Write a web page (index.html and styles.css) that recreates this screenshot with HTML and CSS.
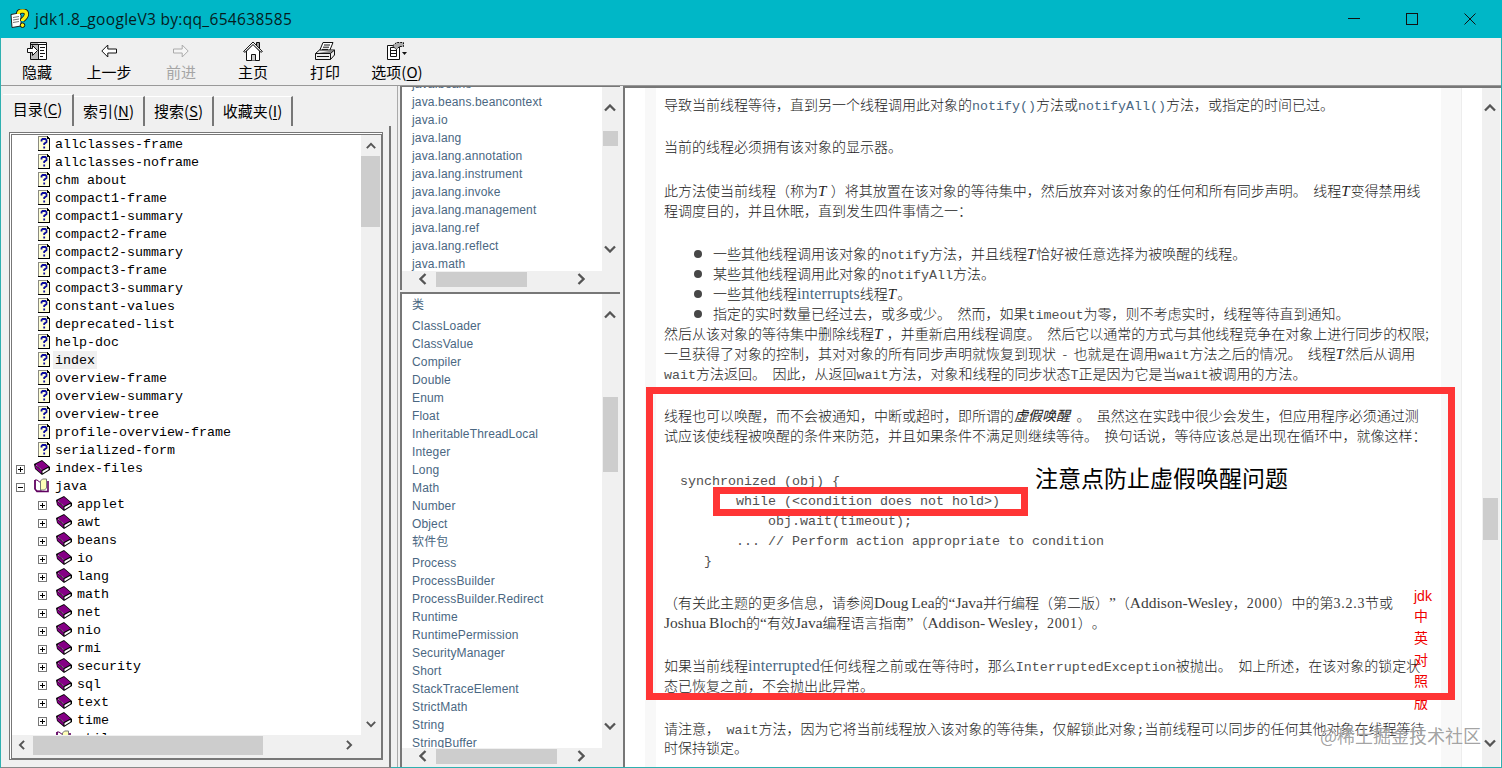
FILE: index.html
```
<!DOCTYPE html>
<html lang="zh-CN">
<head>
  <meta charset="utf-8">
  <title>jdk1.8_googleV3 by:qq_654638585</title>
  <link rel="stylesheet" href="styles.css">
</head>
<body>
  <!-- shared icons -->
  <svg class="sprite">
    <symbol id="page" viewBox="0 0 12 15">
      <path fill="#ffffd8" d="M0 0h9l3 3v12H0z"/>
      <path fill="#8a8a80" d="M0 0h9v1H1v13H0z"/>
      <path fill="#000" d="M9 0h1v1h1v1h1v13H0v-1h11V3H9z"/>
      <path fill="none" stroke="#0a0a9c" stroke-width="1.800" d="M3.500 5.500V4l1-1h3l1 1v2L6.200 7.700V9M6.200 10.500v2"/>
    </symbol>
    <symbol id="book" viewBox="0 0 16 15">
      <path fill="#000" d="M0 4L8 0l8 7v3L8 15 1 9z"/>
      <path fill="#850085" d="M1.500 4.200L8 1l6.500 5.500L8 10zM1 5l6.500 6v2.500L1.500 8.500z"/>
      <path fill="#fff" d="M8.500 11l6-3.200v2L8.500 13.500z"/>
      <path fill="none" stroke="#e6c0e6" stroke-width=".8" stroke-dasharray="1.200 .6" d="M2 5l6 5.300"/>
    </symbol>
    <symbol id="open" viewBox="0 0 16 15">
      <path fill="#fff" stroke="#600060" d="M1 2h2l4 3v8H3l-2-2z"/>
      <path fill="#ffffb8" stroke="#777" d="M6.500 12V3l2-2h4v9l-2 2z"/>
      <path fill="none" stroke="#600060" stroke-width="1.600" d="M1 2v9l2 2.500h11V3"/>
    </symbol>
    <symbol id="plus" viewBox="0 0 9 9">
      <path fill="#fff" stroke="#777" d="M.5.5h8v8h-8z"/>
      <path stroke="#000" d="M2 4.500h5M4.500 2v5"/>
    </symbol>
    <symbol id="minus" viewBox="0 0 9 9">
      <path fill="#fff" stroke="#777" d="M.5.5h8v8h-8z"/>
      <path stroke="#000" d="M2 4.500h5"/>
    </symbol>
    <symbol id="chev" viewBox="0 0 12 8">
      <path fill="none" stroke="#555" stroke-width="2.300" d="M1 6.500l5-5 5 5"/>
    </symbol>
  </svg>

  <div class="window">
    <div class="titlebar">
      <svg class="app-icon" width="20" height="20" viewBox="0 0 20 20">
        <path fill="#fff" stroke="#222" d="M1 5.500l8-1.500 2 2v11l-9 1.500z"/>
        <path stroke="#777" d="M3 8.500l6-1M3 11l6-1M3 13.500l6-1"/>
        <path fill="none" stroke="#111" stroke-width="5" d="M8.500 5q0-3 4-3t4 3-4 6v1"/>
        <path fill="none" stroke="#f8ee10" stroke-width="3.400" d="M8.500 5q0-3 4-3t4 3-4 6v1"/>
        <circle cx="12.500" cy="16.200" r="2.300" fill="#f8ee10" stroke="#111"/>
      </svg>
      <span class="title">jdk1.8_googleV3 by:qq_654638585</span>
      <div class="controls">
        <svg width="12" height="12"><path d="M0 5.500h12"/></svg>
        <svg width="12" height="12"><path d="M.5.5h11v11H.5z"/></svg>
        <svg class="smooth" width="12" height="12"><path d="M.5.5l11 11M11.500.5l-11 11"/></svg>
      </div>
    </div>

    <div class="toolbar">
      <div class="tool">
        <svg width="20" height="18" viewBox="0 0 20 18">
          <path fill="#fff" stroke="#111" d="M3.500.5h16v17h-16z"/>
          <path fill="#bbb" d="M4 1h7v16H4z"/>
          <path stroke="#111" d="M4 2.500h15M11.500 2v15M13 5.500h5M13 8.500h4M13 11.500h5M13 14.500h3"/>
          <path fill="#fff" stroke="#111" d="M.5 6.500h5v-3l5 5-5 5v-3h-5z"/>
        </svg>
        <span>隐藏</span>
      </div>
      <div class="tool">
        <svg width="16" height="18" viewBox="0 0 16 18"><path fill="#fff" stroke="#111" d="M.8 9l6-6v4h8.700v4H6.800v4z"/></svg>
        <span>上一步</span>
      </div>
      <div class="tool disabled">
        <svg width="16" height="18" viewBox="0 0 16 18"><path fill="#f5f5f5" stroke="#aaa" d="M15.200 9l-6-6v4H.5v4h8.700v4z"/></svg>
        <span>前进</span>
      </div>
      <div class="tool">
        <svg width="20" height="20" viewBox="0 0 20 20">
          <path fill="#999" stroke="#111" d="M13.500 7V1.500h3V9"/>
          <path fill="#fff" stroke="#111" d="M3.500 19.500V10L10 3l6.500 7v9.500z"/>
          <path fill="#fff" stroke="#111" d="M.6 10.500L10 1l9.400 9.500-1.400.8L10 3.600 2 11.300z"/>
          <path fill="#ccc" stroke="#111" d="M8.500 19.500v-6h4v6"/>
        </svg>
        <span>主页</span>
      </div>
      <div class="tool">
        <svg width="20" height="18" viewBox="0 0 20 18">
          <path fill="#fff" stroke="#111" d="M4.500 9L8 .5h10L14.500 9z"/>
          <path stroke="#111" d="M9 3h6M8 5.200h6M7 7.400h6"/>
          <path fill="#eee" stroke="#111" d="M.5 11.500l4-3.500H19.500v5l-4 4.500H.5z"/>
          <path fill="#888" stroke="#111" d="M.5 11.500h15l4-3.500M15.500 11.500v6M2 14.500h12"/>
        </svg>
        <span>打印</span>
      </div>
      <div class="tool">
        <svg width="20" height="18" viewBox="0 0 20 18">
          <path fill="#fff" stroke="#111" d="M.5 3.500h12v14H.5z"/>
          <path fill="#fff" stroke="#111" d="M3.500 5.500h6v9h-6z"/>
          <path stroke="#111" d="M4 8.500h5M4 11.500h5"/>
          <path fill="#aaa" stroke="#111" stroke-dasharray="2 1" d="M5.500 4l4-3.500h7v4h-4l-3 3z"/>
          <path fill="#111" d="M15 10h5l-2.500 3z"/>
        </svg>
        <span>选项(<u>O</u>)</span>
      </div>
    </div>

    <div class="main">
      <div class="nav">
        <div class="tabs">
          <div class="tab active">目录(<u>C</u>)</div>
          <div class="tab search-index">索引(<u>N</u>)</div>
          <div class="tab search">搜索(<u>S</u>)</div>
          <div class="tab fav">收藏夹(<u>I</u>)</div>
        </div>
        <div class="tab-body">
          <div class="tree-box">
            <div class="tree">
              <div class="row"><svg class="page"><use href="#page"/></svg><span>allclasses-frame</span></div>
              <div class="row"><svg class="page"><use href="#page"/></svg><span>allclasses-noframe</span></div>
              <div class="row"><svg class="page"><use href="#page"/></svg><span>chm about</span></div>
              <div class="row"><svg class="page"><use href="#page"/></svg><span>compact1-frame</span></div>
              <div class="row"><svg class="page"><use href="#page"/></svg><span>compact1-summary</span></div>
              <div class="row"><svg class="page"><use href="#page"/></svg><span>compact2-frame</span></div>
              <div class="row"><svg class="page"><use href="#page"/></svg><span>compact2-summary</span></div>
              <div class="row"><svg class="page"><use href="#page"/></svg><span>compact3-frame</span></div>
              <div class="row"><svg class="page"><use href="#page"/></svg><span>compact3-summary</span></div>
              <div class="row"><svg class="page"><use href="#page"/></svg><span>constant-values</span></div>
              <div class="row"><svg class="page"><use href="#page"/></svg><span>deprecated-list</span></div>
              <div class="row"><svg class="page"><use href="#page"/></svg><span>help-doc</span></div>
              <div class="row"><svg class="page"><use href="#page"/></svg><span class="selected">index</span></div>
              <div class="row"><svg class="page"><use href="#page"/></svg><span>overview-frame</span></div>
              <div class="row"><svg class="page"><use href="#page"/></svg><span>overview-summary</span></div>
              <div class="row"><svg class="page"><use href="#page"/></svg><span>overview-tree</span></div>
              <div class="row"><svg class="page"><use href="#page"/></svg><span>profile-overview-frame</span></div>
              <div class="row"><svg class="page"><use href="#page"/></svg><span>serialized-form</span></div>
              <div class="row folder"><svg class="box"><use href="#plus"/></svg><svg class="book"><use href="#book"/></svg><span>index-files</span></div>
              <div class="row folder"><svg class="box"><use href="#minus"/></svg><svg class="book"><use href="#open"/></svg><span>java</span></div>
              <div class="row folder sub"><svg class="box"><use href="#plus"/></svg><svg class="book"><use href="#book"/></svg><span>applet</span></div>
              <div class="row folder sub"><svg class="box"><use href="#plus"/></svg><svg class="book"><use href="#book"/></svg><span>awt</span></div>
              <div class="row folder sub"><svg class="box"><use href="#plus"/></svg><svg class="book"><use href="#book"/></svg><span>beans</span></div>
              <div class="row folder sub"><svg class="box"><use href="#plus"/></svg><svg class="book"><use href="#book"/></svg><span>io</span></div>
              <div class="row folder sub"><svg class="box"><use href="#plus"/></svg><svg class="book"><use href="#book"/></svg><span>lang</span></div>
              <div class="row folder sub"><svg class="box"><use href="#plus"/></svg><svg class="book"><use href="#book"/></svg><span>math</span></div>
              <div class="row folder sub"><svg class="box"><use href="#plus"/></svg><svg class="book"><use href="#book"/></svg><span>net</span></div>
              <div class="row folder sub"><svg class="box"><use href="#plus"/></svg><svg class="book"><use href="#book"/></svg><span>nio</span></div>
              <div class="row folder sub"><svg class="box"><use href="#plus"/></svg><svg class="book"><use href="#book"/></svg><span>rmi</span></div>
              <div class="row folder sub"><svg class="box"><use href="#plus"/></svg><svg class="book"><use href="#book"/></svg><span>security</span></div>
              <div class="row folder sub"><svg class="box"><use href="#plus"/></svg><svg class="book"><use href="#book"/></svg><span>sql</span></div>
              <div class="row folder sub"><svg class="box"><use href="#plus"/></svg><svg class="book"><use href="#book"/></svg><span>text</span></div>
              <div class="row folder sub"><svg class="box"><use href="#plus"/></svg><svg class="book"><use href="#book"/></svg><span>time</span></div>
              <div class="row folder sub"><svg class="box"></svg><svg class="book"><use href="#open"/></svg><span>util</span></div>
            </div>
            <div class="vbar tree-v">
              <svg class="chev"><use href="#chev"/></svg>
              <div class="thumb"></div>
              <svg class="chev down"><use href="#chev"/></svg>
            </div>
            <div class="hbar tree-h">
              <svg class="chev left"><use href="#chev"/></svg>
              <div class="thumb"></div>
              <svg class="chev right"><use href="#chev"/></svg>
            </div>
          </div>
        </div>
      </div>

      <div class="frames">
        <div class="frame packages">
          <div class="links">
            <a>java.beans</a>
            <a>java.beans.beancontext</a>
            <a>java.io</a>
            <a>java.lang</a>
            <a>java.lang.annotation</a>
            <a>java.lang.instrument</a>
            <a>java.lang.invoke</a>
            <a>java.lang.management</a>
            <a>java.lang.ref</a>
            <a>java.lang.reflect</a>
            <a>java.math</a>
          </div>
          <div class="vbar">
            <svg class="chev"><use href="#chev"/></svg>
            <div class="thumb"></div>
            <svg class="chev down"><use href="#chev"/></svg>
          </div>
          <div class="hbar">
            <svg class="chev left"><use href="#chev"/></svg>
            <div class="thumb"></div>
            <svg class="chev right"><use href="#chev"/></svg>
          </div>
        </div>
        <div class="frame classes">
          <div class="links">
            <a class="cjk">类</a>
            <a>ClassLoader</a>
            <a>ClassValue</a>
            <a>Compiler</a>
            <a>Double</a>
            <a>Enum</a>
            <a>Float</a>
            <a>InheritableThreadLocal</a>
            <a>Integer</a>
            <a>Long</a>
            <a>Math</a>
            <a>Number</a>
            <a>Object</a>
            <a class="cjk">软件包</a>
            <a>Process</a>
            <a>ProcessBuilder</a>
            <a>ProcessBuilder.Redirect</a>
            <a>Runtime</a>
            <a>RuntimePermission</a>
            <a>SecurityManager</a>
            <a>Short</a>
            <a>StackTraceElement</a>
            <a>StrictMath</a>
            <a>String</a>
            <a>StringBuffer</a>
          </div>
          <div class="vbar">
            <svg class="chev"><use href="#chev"/></svg>
            <div class="thumb"></div>
            <svg class="chev down"><use href="#chev"/></svg>
          </div>
          <div class="hbar">
            <svg class="chev left"><use href="#chev"/></svg>
            <div class="thumb"></div>
            <svg class="chev right"><use href="#chev"/></svg>
          </div>
        </div>
      </div>

      <div class="doc">
        <div class="article">
          <p>导致当前线程等待，直到另一个线程调用此对象的<code class="link">notify()</code>方法或<code class="link">notifyAll()</code>方法，或指定的时间已过。</p>
          <p class="p2">当前的线程必须拥有该对象的显示器。</p>
          <p class="p3">此方法使当前线程（称为<i>T </i>）将其放置在该对象的等待集中，然后放弃对该对象的任何和所有同步声明。 线程<i>T</i>变得禁用线<br>程调度目的，并且休眠，直到发生四件事情之一：</p>
          <ul>
            <li>一些其他线程调用该对象的<code>notify</code>方法，并且线程<i>T</i>恰好被任意选择为被唤醒的线程。</li>
            <li>某些其他线程调用此对象的<code>notifyAll</code>方法。</li>
            <li>一些其他线程<b class="link">interrupts</b>线程<i>T</i>。</li>
            <li>指定的实时数量已经过去，或多或少。 然而，如果<code>timeout</code>为零，则不考虑实时，线程等待直到通知。</li>
          </ul>
          <p>然后从该对象的等待集中删除线程<i>T </i>，并重新启用线程调度。 然后它以通常的方式与其他线程竞争在对象上进行同步的权限;<br>一旦获得了对象的控制，其对对象的所有同步声明就恢复到现状 - 也就是在调用<code>wait</code>方法之后的情况。 线程<i>T</i>然后从调用<br><code>wait</code>方法返回。 因此，从返回<code>wait</code>方法，对象和线程的同步状态<code>T</code>正是因为它是当<code>wait</code>被调用的方法。</p>
          <p class="p4">线程也可以唤醒，而不会被通知，中断或超时，即所谓的<em>虚假唤醒</em> 。 虽然这在实践中很少会发生，但应用程序必须通过测<br>试应该使线程被唤醒的条件来防范，并且如果条件不满足则继续等待。 换句话说，等待应该总是出现在循环中，就像这样：</p>
<pre>  synchronized (obj) {
         while (&lt;condition does not hold&gt;)
             obj.wait(timeout);
         ... // Perform action appropriate to condition
     }</pre>
          <p class="p5">（有关此主题的更多信息，请参阅<b>Doug Lea</b>的<b>“Java</b>并行编程（第二版）<b>”</b>（<b>Addison-Wesley</b>，<b class="num">2000</b>）中的第<b class="num">3.2.3</b>节或<br><b>Joshua Bloch</b>的<b>“</b>有效<b>Java</b>编程语言指南<b>”</b>（<b>Addison- Wesley</b>，<b class="num">2001</b>）。</p>
          <p class="p6">如果当前线程<b class="link">interrupted</b>任何线程之前或在等待时，那么<code>InterruptedException</code>被抛出。 如上所述，在该对象的锁定状<br>态已恢复之前，不会抛出此异常。</p>
          <p class="p7">请注意， <code>wait</code>方法，因为它将当前线程放入该对象的等待集，仅解锁此对象<code>;</code>当前线程可以同步的任何其他对象在线程等待<br>时保持锁定。</p>
        </div>
        <div class="vbar doc-v">
          <svg class="chev"><use href="#chev"/></svg>
          <div class="thumb"></div>
          <svg class="chev down"><use href="#chev"/></svg>
        </div>
      </div>
    </div>
  </div>

  <!-- marks drawn over the page -->
  <div class="side-note"><span class="latin">jdk</span><span>中</span><span>英</span><span>对</span><span>照</span><span>版</span></div>
  <div class="mark mark-big"></div>
  <div class="mark mark-code"></div>
  <div class="remark">注意点防止虚假唤醒问题</div>
  <div class="watermark">@稀土掘金技术社区</div>
</body>
</html>
```
FILE: styles.css
```
* {
  box-sizing: border-box;
}
body {
  margin: 0;
  overflow: hidden;
  font-family: "Liberation Sans", "Noto Sans CJK SC", sans-serif;
}
svg {
  display: block;
  flex: none;
}
.sprite {
  position: absolute;
  width: 0;
  height: 0;
}
.window {
  display: flex;
  flex-direction: column;
  width: 1502px;
  height: 768px;
  border: 1px solid #2fb0b0;
  border-top: 0;
  background: #f0f0f0;
}

/* title bar */
.titlebar {
  display: flex;
  align-items: center;
  flex: none;
  height: 38px;
  margin: 0 -1px;
  padding-left: 10px;
  background: #00b7c7;
}
.title {
  margin-left: 5px;
  color: #061c1e;
  font: 15.5px/20px "Open Sans", "Noto Sans", sans-serif;
  letter-spacing: 0.32px;
}
.controls {
  display: flex;
  gap: 46px;
  margin-left: auto;
  padding-right: 26px;
}
.controls path {
  fill: none;
  stroke: #111;
  shape-rendering: crispEdges;
}
.controls .smooth path {
  shape-rendering: auto;
}

/* toolbar */
.toolbar {
  display: flex;
  flex: none;
  height: 48px;
  border-bottom: 1px solid #999;
}
.tool {
  display: flex;
  flex-direction: column;
  align-items: center;
  width: 72px;
  padding-top: 3px;
  font: 15px/20px "Noto Sans CJK SC", sans-serif;
  white-space: nowrap;
}
.tool svg {
  height: 20px;
}
.tool span {
  margin-top: 1px;
}
.disabled {
  color: #a5a5a5;
}
u {
  text-underline-offset: 2px;
}

.main {
  display: flex;
  flex: 1;
  min-height: 0;
}

/* left side */
.nav {
  display: flex;
  flex-direction: column;
  width: 397px;
  padding: 8px 6px 1px 0;
  border-right: 1px solid #aaa;
}
.tabs {
  display: flex;
  align-items: flex-end;
  height: 32px;
  padding-left: 2px;
}
.tab {
  height: 30px;
  border-top: 1px solid #fff;
  border-right: 2px solid #777;
  font: 15px/28px "Noto Sans CJK SC", sans-serif;
  text-align: center;
  white-space: nowrap;
}
.active {
  width: 71px;
  height: 32px;
}
.search-index {
  width: 71px;
}
.search {
  width: 69px;
}
.fav {
  width: 79px;
}
.tab-body {
  flex: 1;
  padding: 6px 6px 7px 8px;
  border-right: 2px solid #777;
  border-bottom: 1px solid #888;
}
.tree-box {
  display: grid;
  grid-template-columns: 349px 1fr;
  grid-template-rows: 600px 1fr;
  height: 628px;
  border: 3px double #777;
  border-width: 3px 2px 2px 3px;
  border-style: double solid solid double;
  background: #fff;
}
.tree {
  overflow: hidden;
  font: 13.33px/16px "Liberation Mono", monospace;
}
.row {
  display: flex;
  align-items: center;
  height: 18px;
  padding-left: 26px;
  white-space: pre;
}
.row span {
  padding-top: 2px;
}
.page {
  width: 12px;
  height: 15px;
  margin: 0 5px 1px 0;
}
.folder {
  padding-left: 4px;
}
.sub {
  padding-left: 26px;
}
.box {
  width: 9px;
  height: 9px;
  margin: 2px 9px 0 0;
  shape-rendering: crispEdges;
}
.book {
  width: 16px;
  height: 15px;
  margin: 0 5px 2px 0;
}
.row .selected {
  margin-left: -2px;
  padding: 2px 2px 0;
  background: #f0f0f0;
}

/* scroll bars */
.vbar,
.hbar {
  display: flex;
  align-items: center;
  background: #f0f0f0;
}
.vbar {
  flex-direction: column;
}
.hbar {
  grid-column: 1 / -1;
}
.thumb {
  background: #cdcdcd;
}
.chev {
  width: 12px;
  height: 8px;
}
.down {
  margin-top: auto;
  transform: rotate(180deg);
}
.left {
  transform: rotate(-90deg);
}
.right {
  transform: rotate(90deg);
}
.tree-v {
  padding: 7px 1px 7px 0;
}
.tree-v .chev,
.tree-h .chev {
  width: 10px;
}
.tree-v .thumb {
  width: 19px;
  height: 71px;
  margin-top: 6px;
}
.tree-h {
  padding: 0 0 3px 5px;
}
.tree-h .thumb {
  width: 230px;
  height: 19px;
  margin: 0 81px 0 6px;
}

/* middle frames */
.frames {
  display: flex;
  flex-direction: column;
  width: 226px;
  padding: 0 4px 0 2px;
}
.frame {
  display: grid;
  grid-template-columns: 200px 1fr;
  border-top: 2px solid #777;
  border-left: 2px solid #777;
  overflow: hidden;
}
.packages {
  grid-template-rows: 184px 1fr;
  height: 204px;
  margin-bottom: 2px;
  border-top-width: 1px;
}
.classes {
  grid-template-rows: 454px 1fr;
  flex: 1;
}
.links {
  display: flex;
  flex-direction: column;
  padding-left: 10px;
  overflow: hidden;
  background: #fff;
  color: #4a6782;
  font-size: 12px;
  line-height: 18px;
  letter-spacing: 0.15px;
}
.links a {
  flex: none;
}
.packages .links a:first-child {
  margin-top: -12px;
}
.classes .links a:first-child {
  margin-top: 2px;
}
.classes .links .cjk {
  height: 19px;
}
.classes .cjk + a {
  margin-top: 2px;
}
.frame .vbar {
  padding: 17px 2px 18px 0;
}
.frame .vbar .thumb {
  width: 15px;
  height: 15px;
  margin-top: 19px;
}
.classes .vbar .thumb {
  height: 75px;
  margin-top: 78px;
}
.frame .hbar {
  padding: 0 0 3px 15px;
}
.frame .hbar .thumb {
  width: 91px;
  height: 15px;
  margin: 0 48px 0 7px;
}
.classes .hbar .thumb {
  width: 121px;
  margin-right: 18px;
}

/* document */
.doc {
  display: flex;
  flex: 1;
  min-width: 0;
  padding-left: 20px;
  margin-left: -1px;
  border-top: 2px solid #777;
  border-left: 2px solid #777;
  background: #fff;
}
.article {
  width: 817px;
  margin-right: 20px;
  padding: 6px 0 0 8px;
  border: 1px solid #ededed;
  border-width: 0 1px;
  border-left: 11px solid #f8f8f8;
  box-shadow: inset -20px 0 #f8f8f8;
  overflow: hidden;
  color: #222;
  font: 14px/20px "Noto Sans CJK SC", sans-serif;
  font-weight: 300;
  white-space: nowrap;
  word-spacing: 3.3px;
  text-spacing-trim: space-all;
}
.article p {
  margin: 0;
}
.article .p2 { margin-top: 22px; }
.article .p3 { margin-top: 24px; }
.article .p4 { margin-top: 22px; }
.article .p5 { margin-top: 20px; }
.article .p6 { margin-top: 23px; }
.article .p7 {
  margin-top: 24px;
  line-height: 19px;
}
.article ul {
  margin: 23px 0 0;
  padding: 0;
  list-style: none;
}
.article li {
  height: 20px;
  padding-left: 30px;
}
.article li::before {
  content: "";
  display: inline-block;
  width: 8px;
  height: 8px;
  margin-right: 11px;
  border-radius: 50%;
  background: #474747;
  vertical-align: 1px;
}
code,
pre {
  color: #505050;
  font: 13.33px/20px "Liberation Mono", monospace;
  word-spacing: 0;
}
code {
  line-height: 1;
}
pre {
  margin: 27px 0 0;
}
.article i {
  font: italic 15px/1 "Liberation Serif", serif;
  margin-right: 1px;
  word-spacing: 0;
}
.article b {
  color: #3c3c3c;
  font: 15.5px/1 "Liberation Serif", serif;
  white-space: pre;
  word-spacing: -1px;
}
.article .num {
  font-size: 14px;
  letter-spacing: 0.7px;
}
.article .link {
  color: #4a6782;
}
.article b.link {
  font-size: 16px;
  letter-spacing: 0.15px;
}
em {
  font-style: italic;
  font-weight: 400;
}
.doc-v {
  width: 18px;
  padding: 16px 2px 20px 0;
}
.doc-v .thumb {
  width: 15px;
  height: 42px;
  margin-top: 386px;
}

/* overlays */
.mark {
  position: absolute;
  border: 7px solid #ff3535;
}
.mark-big {
  left: 646px;
  top: 387px;
  width: 809px;
  height: 313px;
}
.mark-code {
  left: 713px;
  top: 487px;
  width: 315px;
  height: 29px;
}
.remark {
  position: absolute;
  left: 1035px;
  top: 461px;
  font: 23px/32px "Noto Sans CJK SC", sans-serif;
  white-space: nowrap;
}
.side-note {
  position: absolute;
  left: 1414px;
  top: 586px;
  display: flex;
  flex-direction: column;
  color: #f00000;
  font: 14px/21.8px "Noto Sans CJK SC", sans-serif;
}
.side-note .latin {
  height: 19px;
  font-family: "Liberation Sans", sans-serif;
}
.watermark {
  position: absolute;
  left: 1320px;
  top: 723px;
  color: rgba(110, 110, 110, 0.65);
  font: 18px/24px "Noto Sans CJK SC", sans-serif;
  text-shadow: 0 0 1px #fff;
  white-space: nowrap;
}
```
